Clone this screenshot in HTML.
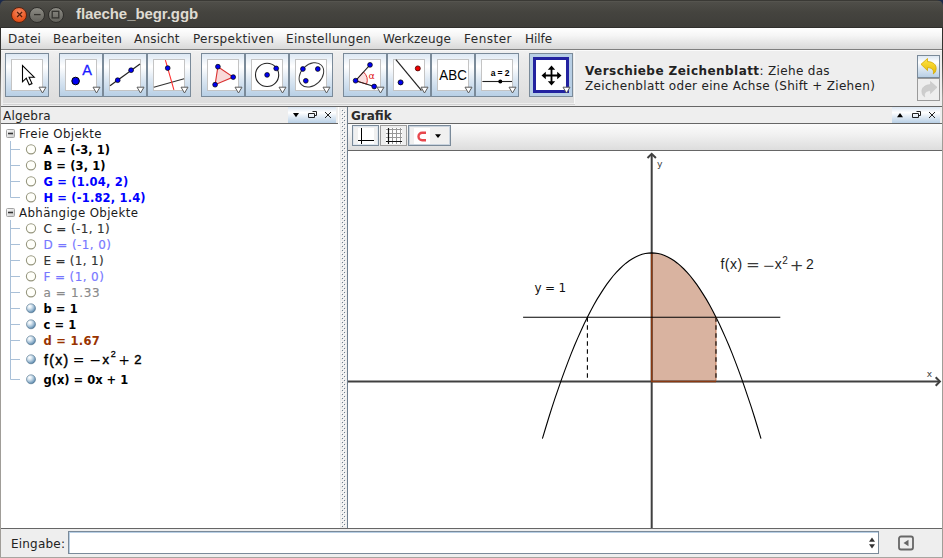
<!DOCTYPE html>
<html lang="de">
<head>
<meta charset="utf-8">
<title>flaeche_begr.ggb</title>
<style>
*{box-sizing:border-box;margin:0;padding:0}
html,body{width:943px;height:558px;overflow:hidden}
body{position:relative;background:#eeeeee;font-family:"DejaVu Sans","Liberation Sans",sans-serif;font-size:12px;color:#222;}
.abs{position:absolute}
/* title bar */
#corner{left:0;top:0;width:943px;height:8px;background:#1c2a4a}
#title{left:0;top:0;width:943px;height:28px;border-radius:6px 6px 0 0;background:linear-gradient(#3a3935 0,#3a3935 1px,#5c5b55 1px,#4f4e49 2px,#45443f 12px,#3e3d39 27px,#302f2c 27px,#302f2c 28px);}
#title .t{position:absolute;left:76px;top:5px;font-family:"Liberation Sans","DejaVu Sans",sans-serif;font-weight:bold;font-size:15px;line-height:17px;color:#dfdbd2;letter-spacing:-0.08px;white-space:nowrap}
.wb{position:absolute;top:6.600px;width:16px;height:16px;border-radius:50%;}
/* menubar */
#menu{left:1px;top:28px;width:941px;height:21px;background:linear-gradient(#ffffff 0,#f6f6f6 35%,#e6e6e6 70%,#d9d9d9 100%);}
#menu span{position:absolute;top:4px;white-space:nowrap;color:#2a2a2a;letter-spacing:0.15px}
#menuline{left:1px;top:49px;width:941px;height:1px;background:#7f7f7f}
/* toolbar */
#tb{left:3px;top:50px;width:572px;height:53px;background:linear-gradient(#ffffff 0,#f0f0f0 1px,#ececec 8px,#dddddd 100%)}
#tbl{left:3px;top:104px;width:572px;height:1px;background:#d2d2d2}
.btn{position:absolute;top:53px;width:44px;height:44px;border:1px solid #7a8a99;background:linear-gradient(#dde8f3 0,#ffffff 30%,#dde8f3 60%,#b8cfe5 100%)}
.btn .ic{position:absolute;left:5px;top:5px;width:32px;height:32px;background:#fff;border:1px solid #c4c4c4}
.btn svg.i{position:absolute;left:5px;top:5px;width:32px;height:32px}
.btn svg.dd{position:absolute;left:32px;top:32px;width:9px;height:8px}
.btn.sel{background:#b8cfe5}
.btn.sel .ic{left:3px;top:3px;width:36px;height:36px;border:3px solid #2222a0}
/* lines */
.hl{position:absolute;height:1px;background:#666}
.vl{position:absolute;width:1px;background:#666}
.row{position:absolute;left:43.400px;white-space:nowrap;font-weight:bold;font-size:11.500px;height:16px;line-height:16px;margin-top:1px;letter-spacing:.1px}
.row.r{font-weight:normal;font-size:12px;letter-spacing:.3px;-webkit-text-stroke:.15px currentColor}
.fx{position:absolute;white-space:nowrap;color:#000;line-height:16px;height:16px}
.fx.t{font-family:"Liberation Sans","DejaVu Sans",sans-serif;font-size:13px;-webkit-text-stroke:.35px #000}
.fx.o{font-family:"DejaVu Sans","Liberation Sans",sans-serif;font-size:12px}
.grp{position:absolute;left:19px;white-space:nowrap;height:16px;line-height:16px;color:#1a1a1a;letter-spacing:0.37px;margin-top:1px;font-size:11.800px}
</style>
</head>
<body>
<div class="abs" id="corner"></div>
<div class="abs" id="title">
  <div class="wb" style="left:11.300px;background:radial-gradient(circle at 50% 30%,#f58a64,#e8551f 65%,#cf4512);border:1px solid #5a2410"></div>
  <div class="wb" style="left:29.300px;background:linear-gradient(#8c8b84,#62615b);border:1px solid #2f2e2b"></div>
  <div class="wb" style="left:47.500px;background:linear-gradient(#8c8b84,#62615b);border:1px solid #2f2e2b"></div>
  <svg class="abs" style="left:0;top:0" width="80" height="28" viewBox="0 0 80 28">
    <path d="M17.100 12L22.100 17M22.100 12L17.100 17" stroke="#55200c" stroke-width="1.200" fill="none"/>
    <path d="M34 14.600H40.600" stroke="#34332f" stroke-width="1.300"/>
    <rect x="52.200" y="11.300" width="6.600" height="6.600" fill="none" stroke="#34332f" stroke-width="1.300"/>
  </svg>
  <div class="t">flaeche_begr.ggb</div>
</div>
<div class="abs" id="menu">
  <span style="left:7px;letter-spacing:.2px">Datei</span>
  <span style="left:52px;letter-spacing:.32px">Bearbeiten</span>
  <span style="left:133px;letter-spacing:.2px">Ansicht</span>
  <span style="left:192px;letter-spacing:.3px">Perspektiven</span>
  <span style="left:285px;letter-spacing:.3px">Einstellungen</span>
  <span style="left:382px;letter-spacing:.15px">Werkzeuge</span>
  <span style="left:463px;letter-spacing:.5px">Fenster</span>
  <span style="left:524px;letter-spacing:-.05px">Hilfe</span>
</div>
<div class="abs" id="menuline"></div>
<div class="abs" style="left:1px;top:50px;width:941px;height:1px;background:#fbfbfb"></div>
<div class="abs" id="tb"></div>
<div class="abs" style="left:574px;top:51px;width:1px;height:53px;background:#f8f8f8"></div>
<div class="abs" id="tbl"></div>

<!-- TOOLBAR BUTTONS -->
<div id="buttons">
<!-- 1 pointer -->
<div class="btn" style="left:5px"><div class="ic"></div>
<svg class="i" viewBox="0 0 32 32"><path d="M11.500 6.500V22.800L15.300 19.200L18.200 25.800L21 24.600L18.100 18.200H23.200Z" fill="#fff" stroke="#000" stroke-width="1.100" stroke-linejoin="miter"/></svg>
<svg class="dd" viewBox="0 0 9 8"><path d="M1 1.200H8L4.500 7Z" fill="#fff" stroke="#5c5c5c" stroke-width="1"/></svg></div>
<!-- 2 point -->
<div class="btn" style="left:59px"><div class="ic"></div>
<svg class="i" viewBox="0 0 32 32"><circle cx="10.600" cy="22" r="3.800" fill="#0000f0" stroke="#000" stroke-width="1"/><text x="17.200" y="16.200" font-family="Liberation Sans,sans-serif" font-size="14.500" fill="#1a1aff" stroke="#1a1aff" stroke-width=".3">A</text></svg>
<svg class="dd" viewBox="0 0 9 8"><path d="M1 1.200H8L4.500 7Z" fill="#fff" stroke="#5c5c5c" stroke-width="1"/></svg></div>
<!-- 3 line -->
<div class="btn" style="left:103px"><div class="ic"></div>
<svg class="i" viewBox="0 0 32 32"><path d="M1 26.800L31 4.900" stroke="#222" stroke-width="1.200"/><circle cx="8.700" cy="21.200" r="2.400" fill="#0000f0" stroke="#000" stroke-width=".7"/><circle cx="22.100" cy="11.200" r="2.400" fill="#0000f0" stroke="#000" stroke-width=".7"/></svg>
<svg class="dd" viewBox="0 0 9 8"><path d="M1 1.200H8L4.500 7Z" fill="#fff" stroke="#5c5c5c" stroke-width="1"/></svg></div>
<!-- 4 perpendicular -->
<div class="btn" style="left:147px"><div class="ic"></div>
<svg class="i" viewBox="0 0 32 32"><path d="M0.800 28.200L31.100 19.800" stroke="#333" stroke-width="1.100"/><path d="M12.400 1.100L20.900 30.800" stroke="#ff3030" stroke-width="1.100"/><circle cx="14.700" cy="9.100" r="2.400" fill="#0000f0" stroke="#000" stroke-width=".7"/></svg>
<svg class="dd" viewBox="0 0 9 8"><path d="M1 1.200H8L4.500 7Z" fill="#fff" stroke="#5c5c5c" stroke-width="1"/></svg></div>
<!-- 5 polygon -->
<div class="btn" style="left:201px"><div class="ic"></div>
<svg class="i" viewBox="0 0 32 32"><path d="M10.900 7.700L26.200 18.100L8.100 25.700Z" fill="#f9d9d9" stroke="#d93030" stroke-width="1.100"/><circle cx="10.900" cy="7.700" r="2.400" fill="#0000f0" stroke="#000" stroke-width=".7"/><circle cx="26.200" cy="18.100" r="2.400" fill="#0000f0" stroke="#000" stroke-width=".7"/><circle cx="8.100" cy="25.700" r="2.400" fill="#0000f0" stroke="#000" stroke-width=".7"/></svg>
<svg class="dd" viewBox="0 0 9 8"><path d="M1 1.200H8L4.500 7Z" fill="#fff" stroke="#5c5c5c" stroke-width="1"/></svg></div>
<!-- 6 circle -->
<div class="btn" style="left:245px"><div class="ic"></div>
<svg class="i" viewBox="0 0 32 32"><circle cx="16.100" cy="15.900" r="11.600" fill="none" stroke="#222" stroke-width="1.100"/><circle cx="16.100" cy="15.900" r="2.400" fill="#0000f0" stroke="#000" stroke-width=".7"/><circle cx="25.200" cy="9.400" r="2.400" fill="#0000f0" stroke="#000" stroke-width=".7"/></svg>
<svg class="dd" viewBox="0 0 9 8"><path d="M1 1.200H8L4.500 7Z" fill="#fff" stroke="#5c5c5c" stroke-width="1"/></svg></div>
<!-- 7 ellipse -->
<div class="btn" style="left:289px"><div class="ic"></div>
<svg class="i" viewBox="0 0 32 32"><ellipse cx="16.400" cy="15.900" rx="13.900" ry="10.300" transform="rotate(-44 16.400 15.900)" fill="none" stroke="#333" stroke-width="1"/><circle cx="7.900" cy="10" r="2.400" fill="#0000f0" stroke="#000" stroke-width=".7"/><circle cx="22.800" cy="10" r="2.400" fill="#0000f0" stroke="#000" stroke-width=".7"/><circle cx="10.800" cy="21.800" r="2.400" fill="#0000f0" stroke="#000" stroke-width=".7"/></svg>
<svg class="dd" viewBox="0 0 9 8"><path d="M1 1.200H8L4.500 7Z" fill="#fff" stroke="#5c5c5c" stroke-width="1"/></svg></div>
<!-- 8 angle -->
<div class="btn" style="left:343px"><div class="ic"></div>
<svg class="i" viewBox="0 0 32 32"><path d="M6.600 21.700L14.500 13A11.500 11.500 0 0 1 17.600 25.100Z" fill="#fbe1e1" stroke="#e03030" stroke-width="1"/><path d="M21 5.900L6.600 21.700L25.200 27.500" fill="none" stroke="#222" stroke-width="1.100"/><circle cx="21" cy="5.900" r="2.400" fill="#0000f0" stroke="#000" stroke-width=".7"/><circle cx="6.600" cy="21.700" r="2.400" fill="#0000f0" stroke="#000" stroke-width=".7"/><circle cx="25.200" cy="27.500" r="2.400" fill="#0000f0" stroke="#000" stroke-width=".7"/><text x="19.500" y="20" font-family="DejaVu Sans,sans-serif" font-size="9.500" fill="#e02020">α</text></svg>
<svg class="dd" viewBox="0 0 9 8"><path d="M1 1.200H8L4.500 7Z" fill="#fff" stroke="#5c5c5c" stroke-width="1"/></svg></div>
<!-- 9 reflect -->
<div class="btn" style="left:387px"><div class="ic"></div>
<svg class="i" viewBox="0 0 32 32"><path d="M2.900 0.700L28.400 31.400" stroke="#222" stroke-width="1.200"/><circle cx="24.800" cy="9.400" r="2.500" fill="#f00000" stroke="#400" stroke-width=".8"/><circle cx="7.600" cy="23.400" r="2.500" fill="#0000f0" stroke="#000" stroke-width=".8"/></svg>
<svg class="dd" viewBox="0 0 9 8"><path d="M1 1.200H8L4.500 7Z" fill="#fff" stroke="#5c5c5c" stroke-width="1"/></svg></div>
<!-- 10 text -->
<div class="btn" style="left:431px"><div class="ic"></div>
<svg class="i" viewBox="0 0 32 32"><text x="2.300" y="20.800" font-family="Liberation Sans,sans-serif" font-size="14" fill="#000" textLength="27.500" lengthAdjust="spacingAndGlyphs">ABC</text></svg>
<svg class="dd" viewBox="0 0 9 8"><path d="M1 1.200H8L4.500 7Z" fill="#fff" stroke="#5c5c5c" stroke-width="1"/></svg></div>
<!-- 11 slider -->
<div class="btn" style="left:475px"><div class="ic"></div>
<svg class="i" viewBox="0 0 32 32"><path d="M1.400 22.500H31" stroke="#222" stroke-width="1.100"/><circle cx="19.300" cy="22.500" r="2" fill="#000"/><text x="9.700" y="17.200" font-family="Liberation Sans,sans-serif" font-size="8.500" font-weight="bold" fill="#000" textLength="18.700" lengthAdjust="spacing">a = 2</text></svg>
<svg class="dd" viewBox="0 0 9 8"><path d="M1 1.200H8L4.500 7Z" fill="#fff" stroke="#5c5c5c" stroke-width="1"/></svg></div>
<!-- 12 move -->
<div class="btn sel" style="left:529px"><div class="ic"></div>
<svg class="i" viewBox="0 0 32 32"><path d="M16.500 8.500V24.500M8.500 16.500H24.500" stroke="#000" stroke-width="1.800" fill="none"/><path d="M16.500 6.500L20.200 10.800H12.800ZM16.500 26.500L20.200 22.200H12.800ZM6.500 16.500L10.800 12.800V20.200ZM26.500 16.500L22.200 12.800V20.200Z" fill="#000"/></svg>
<svg class="dd" viewBox="0 0 9 8"><path d="M1 1.200H8L4.500 7Z" fill="#fff" stroke="#5c5c5c" stroke-width="1"/></svg></div>
</div>

<!-- tool help -->
<div class="abs" id="help" style="left:585px;top:64px;line-height:15px;white-space:nowrap;color:#222;font-size:12px;letter-spacing:0.32px"><b style="letter-spacing:.45px">Verschiebe Zeichenblatt</b>: Ziehe das<br>Zeichenblatt oder eine Achse (Shift + Ziehen)</div>
<!-- undo / redo -->
<div class="abs" style="left:917px;top:55px;width:23px;height:23px;border:1px solid #7a8a99;background:linear-gradient(#dde8f3 0,#ffffff 30%,#dde8f3 60%,#b8cfe5 100%)"></div>
<div class="abs" style="left:917px;top:78px;width:23px;height:23px;border:1px solid #9a9a9a;background:#eeeeee"></div>
<svg class="abs" style="left:917px;top:55px" width="23" height="46" viewBox="0 0 23 46">
  <defs><linearGradient id="ug" x1="0" y1="0" x2="0" y2="1"><stop offset="0" stop-color="#ffe64a"/><stop offset="1" stop-color="#e6b800"/></linearGradient></defs>
  <path d="M4 9.300L10.500 3.500V6.600C15.500 6.600 19.600 9.500 19.100 14C18.800 16.500 17.800 18 16.300 18.900C17 16 16 12.800 10.500 12.600V15.600Z" fill="url(#ug)" stroke="#d4a800" stroke-width="0.800" stroke-linejoin="round"/>
  <path transform="translate(1 0)" d="M19 32.300L12.500 26.500V29.600C7.500 29.600 3.400 32.500 3.900 37C4.200 39.500 5.200 41 6.700 41.900C6 39 7 35.800 12.500 35.600V38.600Z" fill="#cdcdcd" stroke="#c6c6c6" stroke-width="0.600" stroke-linejoin="round"/>
</svg>

<!-- ALGEBRA PANEL -->
<div class="abs" style="left:1px;top:107px;width:337px;height:16px;background:#eeeeee"></div>
<div class="abs" style="left:288px;top:107px;width:48px;height:16px;background:linear-gradient(#dbe6f2 0,#ffffff 35%,#dde8f3 65%,#b8cfe5 100%)"></div>
<div class="abs" style="left:3px;top:109px;line-height:15px;color:#222;letter-spacing:0.2px">Algebra</div>
<svg class="abs" style="left:288px;top:107px" width="48" height="16" viewBox="0 0 48 16">
  <path d="M5 6H11L8 10.300Z" fill="#000"/>
  <path d="M20.500 6.500H26.500V10.500H20.500ZM24.500 4.500H28.500V8.500H27" fill="none" stroke="#222" stroke-width="1"/>
  <path d="M37 5L43 11M43 5L37 11" stroke="#222" stroke-width="1"/>
</svg>
<div class="hl" style="left:1px;top:123px;width:337px"></div>
<div class="abs" style="left:1px;top:124px;width:339px;height:404px;background:#fff"></div>
<div class="vl" style="left:338px;top:107px;height:17px;background:#fff"></div>
<!-- divider -->
<div class="abs" id="divider" style="left:340px;top:124px;width:7px;height:404px;background:#eeeeee"></div>
<svg class="abs" style="left:341px;top:109px" width="5" height="418"><defs><pattern id="dots" width="4" height="4" patternUnits="userSpaceOnUse"><rect x="1" y="1" width="1" height="1" fill="#6f7f8f"/><rect x="3" y="3" width="1" height="1" fill="#6f7f8f"/><rect x="0" y="0" width="1" height="1" fill="#fff"/><rect x="2" y="2" width="1" height="1" fill="#fff"/></pattern></defs><rect width="5" height="418" fill="url(#dots)"/></svg>

<!-- tree -->
<svg class="abs" style="left:1px;top:124px" width="60" height="280" viewBox="0 0 60 280">
  <g stroke="#a9c0d8" stroke-width="1" fill="none">
    <path d="M9.500 17V73.500M9.500 25.500H19M9.500 41.500H19M9.500 57.500H19M9.500 73.500H19"/>
    <path d="M9.500 96V255.500M9.500 104.500H19M9.500 120.500H19M9.500 136.500H19M9.500 152.500H19M9.500 168.500H19M9.500 184.500H19M9.500 200.500H19M9.500 216.500H19M9.500 235.500H19M9.500 255.500H19"/>
  </g>
  <g>
    <rect x="5.500" y="5.500" width="8" height="8" rx="1" fill="url(#boxg)" stroke="#a4a4a4"/><path d="M7 9.500H12" stroke="#333" stroke-width="1.600"/>
    <rect x="5.500" y="84.500" width="8" height="8" rx="1" fill="url(#boxg)" stroke="#a4a4a4"/><path d="M7 88.500H12" stroke="#333" stroke-width="1.600"/>
  </g>
  <g fill="#fffffa" stroke="#96967e" stroke-width="1.100">
    <circle cx="30" cy="25.300" r="4.600"/><circle cx="30" cy="41.300" r="4.600"/><circle cx="30" cy="57.300" r="4.600"/><circle cx="30" cy="73.300" r="4.600"/>
    <circle cx="30" cy="104.300" r="4.600"/><circle cx="30" cy="120.300" r="4.600"/><circle cx="30" cy="136.300" r="4.600"/><circle cx="30" cy="152.300" r="4.600"/><circle cx="30" cy="168.300" r="4.600"/>
  </g>
  <defs><linearGradient id="boxg" x1="0" y1="0" x2="1" y2="1"><stop offset="0" stop-color="#ffffff"/><stop offset="1" stop-color="#c8c8c8"/></linearGradient><radialGradient id="ball" cx="35%" cy="30%" r="75%"><stop offset="0" stop-color="#ffffff"/><stop offset="0.250" stop-color="#e4eef5"/><stop offset="0.600" stop-color="#a4c0d6"/><stop offset="1" stop-color="#4c7da3"/></radialGradient></defs>
  <g fill="url(#ball)" stroke="#50708a" stroke-width="0.600">
    <circle cx="30" cy="184.300" r="4.500"/><circle cx="30" cy="200.300" r="4.500"/><circle cx="30" cy="216.300" r="4.500"/><circle cx="30" cy="235.300" r="4.500"/><circle cx="30" cy="255.300" r="4.500"/>
  </g>
</svg>
<div class="grp" style="top:125px">Freie Objekte</div>
<div class="row" style="top:141px;color:#000;letter-spacing:.05px">A = (-3, 1)</div>
<div class="row" style="top:157px;color:#000">B = (3, 1)</div>
<div class="row" style="top:173px;color:#0000ff;letter-spacing:.2px">G = (1.04, 2)</div>
<div class="row" style="top:189px;color:#0000ff;letter-spacing:.17px">H = (-1.82, 1.4)</div>
<div class="grp" style="top:204px">Abhängige Objekte</div>
<div class="row r" style="top:220px;color:#333;letter-spacing:.37px">C = (-1, 1)</div>
<div class="row r" style="top:236px;color:#7777ff;letter-spacing:.4px">D = (-1, 0)</div>
<div class="row r" style="top:252px;color:#333">E = (1, 1)</div>
<div class="row r" style="top:268px;color:#7777ff;letter-spacing:.4px">F = (1, 0)</div>
<div class="row r" style="top:284px;color:#8a8a8a;letter-spacing:.65px">a = 1.33</div>
<div class="row" style="top:300px;color:#000">b = 1</div>
<div class="row" style="top:316px;color:#000">c = 1</div>
<div class="row" style="top:332px;color:#993300;letter-spacing:.3px">d = 1.67</div>
<div class="fx t" style="left:44px;top:352px;letter-spacing:1.300px;font-size:14px;-webkit-text-stroke:.45px #000">f(x)</div>
<div class="fx o" style="left:72.700px;top:352px;font-size:14px">=</div>
<div class="fx o" style="left:89.500px;top:352px;font-size:14px">−</div>
<div class="fx t" style="left:102.600px;top:352px;-webkit-text-stroke:.45px #000">x</div>
<div class="fx t" style="left:110.700px;top:346px;font-size:9px;-webkit-text-stroke:.3px #000">2</div>
<div class="fx o" style="left:118.300px;top:352px;font-size:14px">+</div>
<div class="fx t" style="left:134.200px;top:352px;-webkit-text-stroke:.45px #000">2</div>
<div class="row" style="top:371px;color:#000;letter-spacing:0">g(x) = 0x + 1</div>

<!-- GRAFIK PANEL -->
<div class="vl" style="left:347px;top:107px;height:421px;background:#6f7f8f"></div>
<div class="abs" style="left:348px;top:107px;width:594px;height:16px;background:#eeeeee"></div>
<div class="abs" style="left:892px;top:107px;width:48px;height:16px;background:linear-gradient(#dbe6f2 0,#ffffff 35%,#dde8f3 65%,#b8cfe5 100%)"></div>
<div class="abs" style="left:351px;top:109px;line-height:15px;color:#2c2c2c;font-weight:bold;letter-spacing:0px">Grafik</div>
<svg class="abs" style="left:892px;top:107px" width="48" height="16" viewBox="0 0 48 16">
  <path d="M5 10.300H11L8 6Z" fill="#000"/>
  <path d="M20.500 6.500H26.500V10.500H20.500ZM24.500 4.500H28.500V8.500H27" fill="none" stroke="#222" stroke-width="1"/>
  <path d="M37 5L43 11M43 5L37 11" stroke="#222" stroke-width="1"/>
</svg>
<div class="hl" style="left:348px;top:123px;width:594px"></div>
<div class="abs" style="left:348px;top:124px;width:594px;height:26px;background:linear-gradient(#fbfbfb 0,#f1f1f1 40%,#dddddd 100%)"></div>
<div class="abs" style="left:352px;top:125px;width:27px;height:21px;border:1px solid #7a8a99;background:#f0f0f0;box-shadow:inset 0 0 0 1px #dfe6ee"></div>
<div class="abs" style="left:380px;top:125px;width:27px;height:21px;border:1px solid #9c9c9c;background:#eeeeee"></div>
<div class="abs" style="left:408px;top:125px;width:43px;height:21px;border:1px solid #7a8a99;background:#f0f0f0;box-shadow:inset 0 0 0 1px #c9d3de"></div>
<svg class="abs" style="left:352px;top:125px" width="100" height="22" viewBox="0 0 100 22">
  <rect x="6" y="3" width="16" height="16" fill="#fff"/>
  <path d="M9.500 3V19M6 15.500H22" stroke="#000" stroke-width="1" fill="none"/>
  <rect x="34" y="3" width="16" height="16" fill="#fff"/>
  <path d="M40.500 3V19M44.500 3V19M48.500 3V19M34 4.500H50M34 8.500H50M34 12.500H50" stroke="#999" stroke-width="1" fill="none"/>
  <path d="M36.500 3V19M34 16.500H50" stroke="#111" stroke-width="1.200" fill="none"/>
  <rect x="62" y="3" width="16" height="16" fill="#fff"/>
  <path d="M74 7.800H70.200A3.700 3.700 0 0 0 70.200 15.200H74" fill="none" stroke="#e8484e" stroke-width="2.400"/>
  <path d="M83 9.300H89L86 13Z" fill="#000"/>
</svg>
<div class="hl" style="left:348px;top:150px;width:594px"></div>
<div class="abs" style="left:348px;top:151px;width:594px;height:377px;background:#fff"></div>

<!-- GRAPH -->
<svg class="abs" id="graph" style="left:348px;top:151px" width="594" height="377" viewBox="348 151 594 377">
  <path id="area" d="M651.7 381.5 L651.7 252.9 L653.7 253.0 L655.7 253.2 L657.7 253.5 L659.7 253.9 L661.7 254.5 L663.8 255.2 L665.8 256.0 L667.8 256.9 L669.8 258.0 L671.8 259.2 L673.8 260.5 L675.8 261.9 L677.8 263.5 L679.8 265.2 L681.8 267.0 L683.9 269.0 L685.9 271.0 L687.9 273.2 L689.9 275.6 L691.9 278.0 L693.9 280.6 L695.9 283.3 L697.9 286.1 L699.9 289.1 L701.9 292.1 L703.9 295.3 L706.0 298.7 L708.0 302.1 L710.0 305.7 L712.0 309.4 L714.0 313.2 L716.0 317.2 L716.0 381.5 Z" fill="#d9b3a0" stroke="none"/>
  <path d="M348 381.500H939.500" stroke="#404040" stroke-width="1.800" fill="none"/>
  <path d="M651.700 528V154" stroke="#404040" stroke-width="2" fill="none"/>
  <path d="M647.500 158L651.700 153.800L655.900 158" stroke="#404040" stroke-width="2" fill="none"/>
  <path d="M935.700 377.300L939.900 381.500L935.700 385.700" stroke="#404040" stroke-width="2" fill="none"/>
  <path id="areab" d="M651.7 252.9 V381.5 H716.0" fill="none" stroke="#8a3a12" stroke-width="1.600"/>
  <path id="par" d="M542.4 438.7 L545.6 428.0 L548.8 417.5 L552.0 407.4 L555.2 397.6 L558.5 388.1 L561.7 378.9 L564.9 370.1 L568.1 361.6 L571.3 353.4 L574.5 345.5 L577.8 337.9 L581.0 330.7 L584.2 323.8 L587.4 317.2 L590.6 310.9 L593.8 305.0 L597.0 299.4 L600.3 294.1 L603.5 289.1 L606.7 284.4 L609.9 280.1 L613.1 276.0 L616.3 272.4 L619.6 269.0 L622.8 265.9 L626.0 263.2 L629.2 260.8 L632.4 258.7 L635.6 256.9 L638.8 255.5 L642.1 254.3 L645.3 253.5 L648.5 253.1 L651.7 252.9 L654.9 253.1 L658.1 253.5 L661.3 254.3 L664.6 255.5 L667.8 256.9 L671.0 258.7 L674.2 260.8 L677.4 263.2 L680.6 265.9 L683.9 269.0 L687.1 272.4 L690.3 276.0 L693.5 280.1 L696.7 284.4 L699.9 289.1 L703.1 294.1 L706.4 299.4 L709.6 305.0 L712.8 310.9 L716.0 317.2 L719.2 323.8 L722.4 330.7 L725.6 337.9 L728.9 345.5 L732.1 353.4 L735.3 361.6 L738.5 370.1 L741.7 378.9 L744.9 388.1 L748.1 397.6 L751.4 407.4 L754.6 417.5 L757.8 428.0 L761.0 438.7" fill="none" stroke="#000" stroke-width="1.100"/>
  <path d="M523.1 317.2H780.3" stroke="#000" stroke-width="1.100"/>
  <path d="M587.4 317.2V381" stroke="#000" stroke-width="1.100" stroke-dasharray="4.500 3.500"/>
  <path d="M716.0 317.2V381" stroke="#b5562a" stroke-opacity=".6" stroke-width="1.200"/>
  <path d="M716.0 317.2V381" stroke="#000" stroke-width="1.100" stroke-dasharray="4.500 3.500"/>
  <text x="657" y="167" font-family="DejaVu Sans,sans-serif" font-size="9.300" fill="#404040">y</text>
  <text x="926.800" y="377" font-family="DejaVu Sans,sans-serif" font-size="9" fill="#404040">x</text>
  <text x="534.500" y="292" font-family="DejaVu Sans,sans-serif" font-size="12" fill="#111" letter-spacing="-.2">y = 1</text>
  <g fill="#1c1c1c" font-family="Liberation Sans,sans-serif" font-size="14">
    <text x="720.500" y="268.500" letter-spacing=".45">f(x)</text>
    <text x="774.700" y="268.500">x</text>
    <text x="782.300" y="263.500" font-size="10">2</text>
    <text x="806" y="268.500">2</text>
  </g>
  <g fill="#3a3a3a" font-family="DejaVu Sans,sans-serif">
    <text x="745.900" y="270.300" font-size="16.500">=</text>
    <text x="762.600" y="270.600" font-size="14.500" fill="#555">−</text>
    <text x="789.800" y="270.600" font-size="16.500">+</text>
  </g>
</svg>

<!-- INPUT BAR -->
<div class="hl" style="left:1px;top:528px;width:941px"></div>
<div class="abs" style="left:1px;top:529px;width:941px;height:28px;background:#eeeeee"></div>
<div class="abs" style="left:11px;top:537px;line-height:15px;color:#222;letter-spacing:0.2px">Eingabe:</div>
<div class="abs" style="left:68px;top:531px;width:811px;height:23px;background:#fff;border:1px solid #7a8a99;box-shadow:inset 1px 1px 0 #b8cfe5"></div>
<svg class="abs" style="left:860px;top:531px" width="70" height="24" viewBox="0 0 70 24">
  <path d="M9 10.800H15L12 6.500ZM9 13.200H15L12 17.500Z" fill="#333"/>
  <rect x="39" y="5.500" width="14" height="13" rx="2" fill="none" stroke="#666" stroke-width="1.800"/>
  <path d="M48.500 8.800V15.200L43.500 12Z" fill="#666"/>
</svg>

<!-- panel frame lines -->
<div class="hl" style="left:1px;top:106px;width:941px"></div>

<!-- window borders -->
<div class="vl" style="left:0;top:28px;height:530px;background:linear-gradient(#2f2e2b 0,#3a3936 30px,#a09d98 70px,#a09d98 100%)"></div>
<div class="vl" style="left:942px;top:28px;height:530px;background:linear-gradient(#2f2e2b 0,#3a3936 30px,#a09d98 70px,#a09d98 100%)"></div>
<div class="hl" style="left:0;top:557px;width:943px;background:#a8a5a0"></div>
</body>
</html>
